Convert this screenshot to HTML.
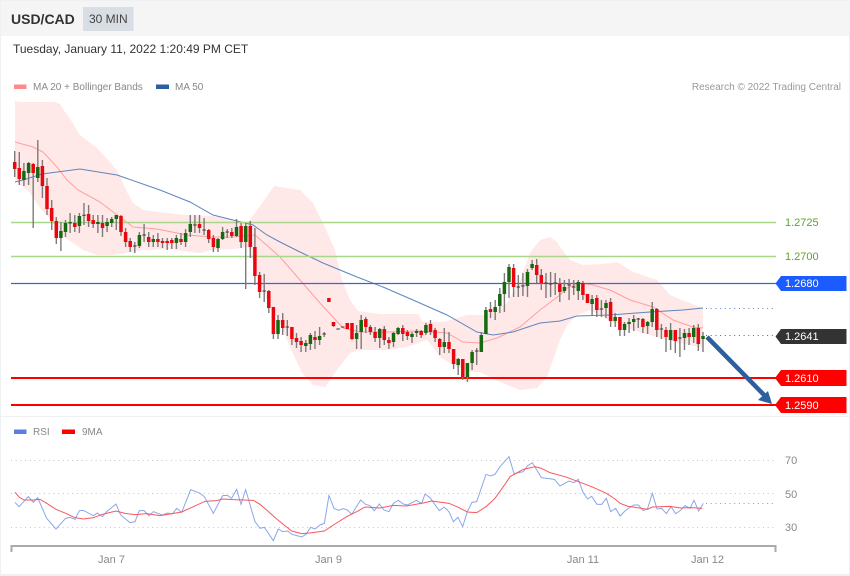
<!DOCTYPE html>
<html><head><meta charset="utf-8"><style>
html,body{margin:0;padding:0;background:#fff}
body{width:850px;height:576px;overflow:hidden;position:relative;font-family:"Liberation Sans",sans-serif}
svg{position:absolute;left:0;top:0}
</style></head><body>
<svg width="850" height="576" viewBox="0 0 850 576" font-family="Liberation Sans, sans-serif">
<rect width="850" height="576" fill="#eef0f3"/>
<rect x="1" y="1" width="848" height="573" fill="#fff"/>
<rect x="1" y="1" width="848" height="35" fill="#f5f5f5"/>
<rect x="83" y="7" width="50.500" height="24" fill="#d9dde4"/>
<text x="11" y="24" font-size="14" font-weight="bold" fill="#333">USD/CAD</text>
<text x="89" y="23" font-size="12" fill="#444">30 MIN</text>
<text x="13" y="53" font-size="12" fill="#333">Tuesday, January 11, 2022 1:20:49 PM CET</text>
<rect x="14" y="84.500" width="12.500" height="4.500" fill="#ff8a8a"/>
<text x="33" y="90" font-size="10" fill="#888">MA 20 + Bollinger Bands</text>
<rect x="156" y="84.500" width="13" height="4.500" fill="#2e5f9e"/>
<text x="175" y="90" font-size="10" fill="#888">MA 50</text>
<text x="841" y="90" font-size="10" fill="#999" text-anchor="end">Research © 2022 Trading Central</text>

<path fill="#ffe8e8" d="M15 101L20 102L55 102L60 104L65 112L72 122L80 135L97 148L110 162L118 172L127 192L133 203L143 210L167 213L187 215L213 216L233 220L248 222L257 210L263 202L270 192L274 186L287 188L300 190L313 203L323 223L335 250L342 280L350 300L358 311L380 314L418 314L423 322L443 322L457 318L467 315L487 315L507 303L520 280L530 253L540 240L550 237L557 242L560 247L570 260L583 265L603 264L617 262L633 272L657 280L670 295L687 302L703 308L703 348L667 340L633 330L612 322L590 310L577 315L567 325L560 340L547 377L537 388L520 390L500 382L480 372L470 372L453 365L440 357L433 347L427 340L407 347L387 350L360 350L350 353L337 370L325 387L313 385L302 373L290 347L280 323L267 300L257 273L248 247L233 249L213 250L200 253L167 249L143 250L130 252L113 255L97 255L83 250L63 236L48 217L40 208L30 193L15 180Z"/>

<path fill="none" stroke="#ff9f9f" stroke-width="1" d="M15 142L33 147L43 152L57 167L67 180L78 190L100 202L117 215L133 227L157 229L187 235L213 237L233 237L255 235L263 242L280 257L300 280L320 303L343 328L360 332L387 332L417 331L447 333L463 342L480 343L497 338L520 327L540 310L560 295L567 288L580 283L593 285L610 290L630 300L653 307L673 320L693 327L703 328"/>
<path fill="none" stroke="#5f85bd" stroke-width="1" d="M15 182L23 180L42 174L80 169L117 175L160 190L190 202L213 215L237 221L253 225L267 235L280 242L300 252L323 263L357 277L383 287L413 300L447 315L477 332L493 335L513 332L540 323L560 321L577 316L610 315L650 312L683 310L703 308"/>

<g stroke-width="1.500">
<path d="M11 222.500H776M11 256.500H776" stroke="#a8d78a"/>
<path d="M11 283.500H776" stroke="#3a66c8" stroke-width="1.300"/>
</g>
<path d="M11 378H776M11 405H776" stroke="#f00" stroke-width="2"/>
<path d="M706 308.500H776" stroke="#5f7fae" stroke-width="1" stroke-dasharray="1 3.700"/>
<path d="M706 335.500H776" stroke="#666" stroke-width="1" stroke-dasharray="1 3.700"/>

<path fill="none" stroke="#7d7a79" stroke-width="1.400" d="M14.700 151V177M19.300 152V185M23.900 163V186M28.600 162V185M33.200 163V228M37.800 140V182M42.400 160V198M47 178V215M51.700 200V230M56.300 217V244M60.900 222V251M65.500 220V237M70.100 213V233M74.800 215V232M79.400 213V233M84 203V225M88.600 205V227M93.200 215V228M97.900 215V233M102.500 215V237M107.100 218V232M111.700 217V227M116.300 215V230M121 215V236M125.600 228V247M130.200 238V252M134.800 242V253M139.400 232V248M144.100 224V242M148.700 232V247M153.300 235V247M157.900 233V247M162.500 238V248M167.200 238V250M171.800 238V249M176.400 235V249M181 233V245M185.600 229V247M190.300 215V237M194.900 215V233M199.500 215V233M204.100 218V235M208.700 229V243M213.400 235V252M218 238V252M222.600 227V240M227.200 229V238M231.800 228V238M236.500 219V237M241.100 223V248M245.700 223V289M250.300 221V258M254.900 228V285M259.600 272V298M264.200 274V302M268.800 290V313M273.400 307V339M278 315V339M282.700 313V335M287.300 320V336M291.900 327V345M296.500 333V348M301.100 337V352M305.800 340V352M310.400 333V350M315 331V349M319.600 327V345M324.200 332V337M333.500 322V327M352 323V340M356.600 325V349M361.200 315V349M365.800 317V333M370.400 325V335M375.100 327V342M379.700 328V348M384.300 326V345M388.900 337V349M393.500 332V347M398.100 327V335M402.800 325V341M407.400 330V340M412 332V343M416.600 329V337M421.200 330V338M425.900 323V335M430.500 320V335M435.100 328V342M439.700 338V355M444.300 328V353M449 332V353M453.600 349V369M458.200 358V375M462.800 359V380M467.400 363V382M472.100 350V370M476.700 348V365M481.300 332V352M485.900 307V334M490.500 302V318M495.200 300V320M499.800 288V313M504.400 273V312M509 264V298M513.600 264V297M518.300 275V297M522.900 273V296M527.500 269V297M532.100 260V270M536.700 259V283M541.300 269V290M546 273V298M550.600 272V297M555.200 273V295M559.800 278V302M564.400 280V293M569.100 279V300M573.700 280V295M578.300 280V300M582.900 281V300M587.500 294V303M592.100 295V315M596.800 295V317M601.400 300V317M606 300V318M610.600 298V327M615.200 313V327M619.900 317V336M624.500 322V336M629.100 318V333M633.700 315V331M638.300 318V328M642.900 318V333M647.600 321V334M652.200 302V327M656.800 308V337M661.400 324V339M666 327V352M670.600 323V350M675.300 330V353M679.900 328V357M684.500 329V350M689.100 328V345M693.700 325V343M698.300 324V351M703 332V352"/>

<path fill="none" stroke="#e8060f" stroke-width="3.500" d="M14.700 162V169M19.300 168V179M33.200 164V173M42.400 166V186M47 186V209M51.700 208V221M56.300 221V238M74.800 223V227M88.600 214V221M93.200 220V224M102.500 223V228M121 216V232M125.600 232V242M130.200 241V247M148.700 237V242M157.900 239V242M162.500 241V243M167.200 241V243M171.800 240V243M181 239V242M199.500 224V228M208.700 230V239M213.400 238V247M231.800 232V236M241.100 226V242M250.300 226V247M254.900 247V276M259.600 275V292M268.800 291V308M273.400 307V334M282.700 320V328M291.900 327V339M296.500 338V342M301.100 341V345M315 337V340M328.900 298V302M333.500 322V326M347.300 323V329M352 323V339M365.800 319V327M370.400 327V332M375.100 332V338M384.300 329V340M388.900 340V343M402.800 328V334M407.400 332V336M421.200 331V335M430.500 324V332M435.100 330V338M439.700 339V347M449 342V349M453.600 349V364M462.800 359V377M490.500 309V312M513.600 268V287M536.700 265V275M541.300 275V283M559.800 284V292M582.900 283V295M587.500 294V303M596.800 298V310M610.600 302V321M619.900 317V330M642.900 319V327M656.800 309V330M666 330V337M675.300 330V341M689.100 333V337M698.300 328V344"/>

<path fill="none" stroke="#17690f" stroke-width="3.500" d="M23.900 171V180M28.600 163V173M37.800 167V178M60.900 231V238M65.500 223V232M70.100 222V223.500M79.400 216V226M97.900 222V224M107.100 222V226M111.700 219V223M116.300 215V219M139.400 235V246M153.300 239V242M176.400 238V243M185.600 233V242M190.300 224V232M218 239V248M222.600 232V239M236.500 227V236M245.700 226V242M278 320V334M305.800 343V346M310.400 335V344M319.600 336V340M356.600 333V339M361.200 320V332M379.700 329V338M393.500 333V342M398.100 328V334M412 334V337M416.600 331V333M425.900 325V333M444.300 342V347M458.200 359V365M467.400 363V377M472.100 352V363M481.300 335V352M485.900 310V334M495.200 307V312M499.800 294V306M504.400 282V294M509 267V282M527.500 272V286M532.100 264V268M564.400 287V291M578.300 282V291M592.100 299V304M606 303V308M615.200 317V321M624.500 324V330M629.100 322V324M633.700 319V322M647.600 322V326M652.200 309V322M670.600 330V340M684.500 333V338M693.700 328V337M703 336V339"/>

<path fill="none" stroke="#3a3a2a" stroke-width="3.500" d="M84 214.700V215.700M134.800 245.500V246.500M144.100 234.500V235.500M194.900 224.500V225.500M204.100 229.500V230.500M227.200 231.500V232.500M264.200 290.500V291.500M287.300 326.500V327.500M324.200 333.500V334.500M338.100 328.500V329.500M342.700 326.500V327.500M476.700 350.500V351.500M518.300 286.500V287.500M522.900 285.500V286.500M546 282.500V283.500M550.600 283.500V284.500M555.200 282.500V283.500M569.100 284.500V285.500M573.700 286.500V287.500M601.400 308.500V309.500M638.300 318.500V319.500M661.400 328.500V329.500M679.900 337.500V338.500"/>

<path d="M707 337L769 400" stroke="#2c5f9e" stroke-width="4.500" fill="none"/>
<path d="M772 404L758 400L768 391Z" fill="#2c5f9e"/>

<path fill="#1a5cff" d="M781 276H846.500V291H781L775.500 283.500Z"/>
<path fill="#333" d="M781 329H846.500V344H781L775.500 336.500Z"/>
<path fill="#f00" d="M781 370H846.500V386H781L775 378Z"/>
<path fill="#f00" d="M781 397H846.500V413H781L775 405Z"/>
<g font-size="11">
<text x="785" y="226" fill="#5aa823">1.2725</text>
<text x="785" y="260" fill="#5aa823">1.2700</text>
<text x="785" y="287" fill="#fff">1.2680</text>
<text x="785" y="340" fill="#fff">1.2641</text>
<text x="785" y="382" fill="#fff">1.2610</text>
<text x="785" y="409" fill="#fff">1.2590</text>
</g>

<rect x="1" y="416" width="848" height="1" fill="#eef0f3"/>
<rect x="14" y="429.500" width="12.500" height="4.500" fill="#5b7fe0"/>
<text x="33" y="435" font-size="10" fill="#888">RSI</text>
<rect x="62" y="429.500" width="13" height="4.500" fill="#f00"/>
<text x="82" y="435" font-size="10" fill="#888">9MA</text>
<path d="M11 460.500H776M11 493.500H776M11 527.500H776" stroke="#c4c4c4" stroke-width="1" stroke-dasharray="1 3.700"/>
<g font-size="11" fill="#888">
<text x="785" y="464">70</text>
<text x="785" y="498">50</text>
<text x="785" y="531">30</text>
<text x="111.500" y="563" text-anchor="middle">Jan 7</text>
<text x="328.500" y="563" text-anchor="middle">Jan 9</text>
<text x="583" y="563" text-anchor="middle">Jan 11</text>
<text x="707.500" y="563" text-anchor="middle">Jan 12</text>
</g>
<path d="M11.500 552V546H775.500V552" fill="none" stroke="#aaa" stroke-width="2"/>

<g transform="translate(0,415) scale(.33333)" fill="none" stroke-width="3">
<path stroke="#8ba6ea" d="M45 262L57 275L85 245L100 262L113 248L140 310L168 342L197 310L210 307L225 313L238 287L250 286L280 302L292 294L307 305L320 290L348 267L362 300L390 323L405 320L418 287L432 287L447 302L460 290L487 300L503 294L517 297L530 280L545 292L572 224L600 235L613 245L640 295L668 242L682 241L695 250L710 223L723 268L737 224L765 320L780 340L793 337L820 377L835 342L848 350L862 348L876 358L905 366L918 358L932 337L945 342L960 330L973 325L987 241L1002 280L1015 286L1030 281L1042 285L1055 298L1082 255L1097 268L1110 272L1123 287L1138 267L1152 285L1167 290L1180 265L1195 256L1210 267L1222 270L1250 256L1265 266L1275 237"/>
<path stroke="#f8575d" d="M45 232L57 246L72 255L100 255L120 253L140 265L168 283L197 295L225 308L250 312L280 308L307 298L348 288L375 295L405 299L440 296L480 302L510 297L545 291L580 275L615 259L650 257L668 252L700 254L730 255L760 256L780 268L800 285L830 312L850 328L875 348L905 356L930 354L973 348L1000 330L1040 305L1070 290L1095 276L1140 279L1180 271L1220 273L1275 263"/>
</g>
<g transform="translate(425,415) scale(.33333)" fill="none" stroke-width="3">
<path stroke="#8ba6ea" d="M0 237L15 248L43 287L57 276L72 290L85 320L99 307L113 335L127 290L141 262L155 260L183 178L197 183L210 178L225 155L252 125L267 176L295 170L307 153L322 143L349 188L388 193L405 213L432 198L447 203L460 193L474 232L488 252L500 244L516 268L530 268L544 250L557 290L572 280L585 303L600 288L613 278L627 270L640 270L655 287L668 280L682 235L696 282L710 280L724 296L738 275L752 296L768 285L780 272L795 280L807 256L821 288L835 265"/>
<path stroke="#f8575d" d="M0 263L20 258L72 265L100 277L127 291L155 293L183 275L210 250L240 208L255 185L295 163L330 155L349 160L375 173L420 185L460 200L500 215L544 235L570 252L585 265L610 274L650 280L668 283L682 276L735 274L765 279L800 278L832 280"/>
</g>
<path d="M706 503.500H776" stroke="#7d9bea" stroke-width="1" stroke-dasharray="1 3.700"/>
</svg>
</body></html>
